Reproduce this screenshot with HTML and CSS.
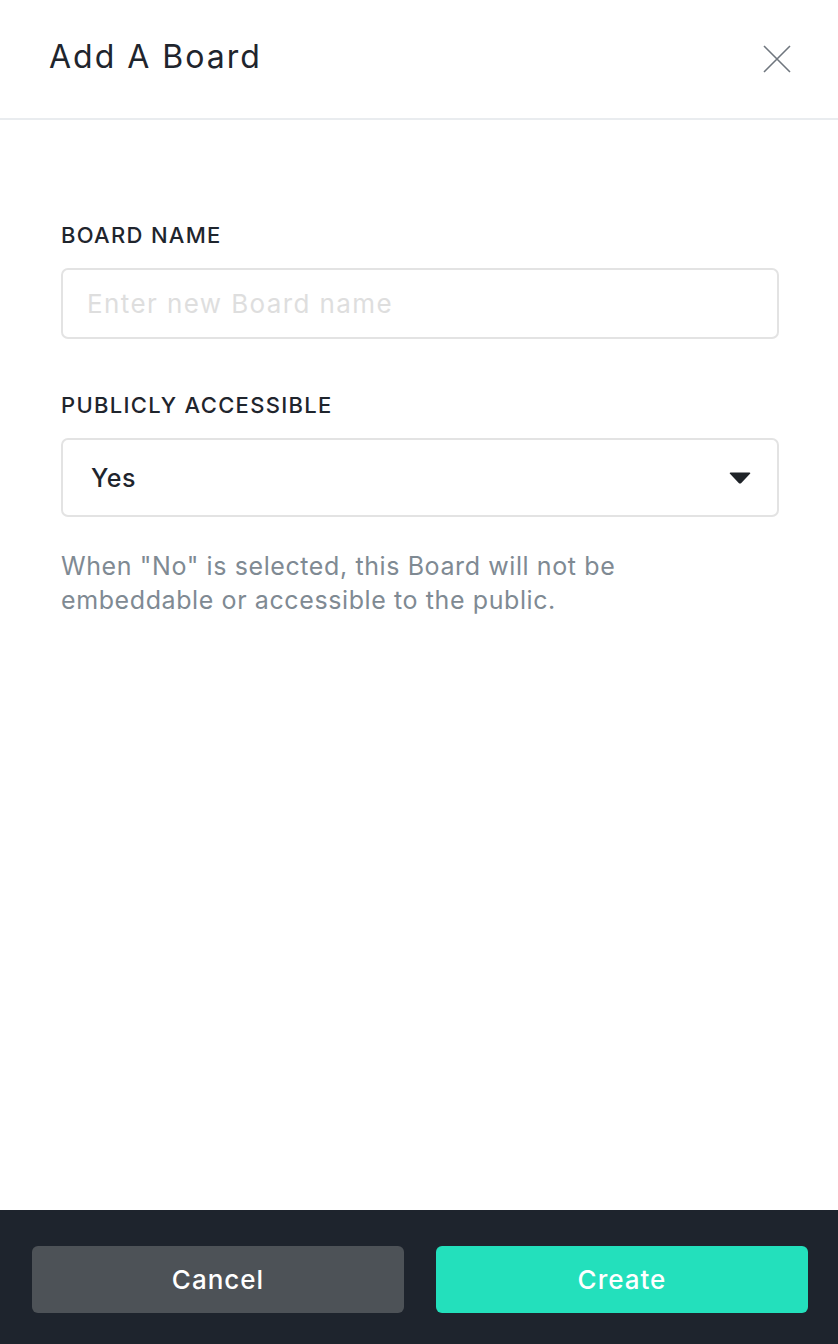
FILE: index.html
```html
<!DOCTYPE html>
<html lang="en">
<head>
<meta charset="utf-8">
<title>Add A Board</title>
<link rel="stylesheet" href="styles.css">
</head>
<body>
<div class="modal">
  <header class="modal-header">
    <h1 class="modal-title">Add A Board</h1>
    <button class="close-btn" aria-label="Close">
      <svg width="28" height="28" viewBox="0 0 28 28"><path d="M1 1 L27 27 M27 1 L1 27" stroke="#6f767e" stroke-width="1.6" fill="none"/></svg>
    </button>
  </header>
  <main class="modal-body">
    <div class="field">
      <label class="field-label">BOARD NAME</label>
      <div class="text-input"><span class="placeholder">Enter new Board name</span></div>
    </div>
    <div class="field">
      <label class="field-label">PUBLICLY ACCESSIBLE</label>
      <div class="select-input">
        <span class="select-value">Yes</span>
        <svg class="caret" width="22" height="12" viewBox="0 0 22 12"><path d="M1.5 0.5 H20.5 Q22 0.5 21 1.7 L12.3 11 Q11 12.2 9.7 11 L1 1.7 Q0 0.5 1.5 0.5 Z" fill="#1f2328"/></svg>
      </div>
      <p class="help-text">When "No" is selected, this Board will not be embeddable or accessible to the public.</p>
    </div>
  </main>
  <footer class="modal-footer">
    <button class="btn btn-cancel">Cancel</button>
    <button class="btn btn-create">Create</button>
  </footer>
</div>
</body>
</html>
```

FILE: styles.css
```css
* { box-sizing: border-box; }
html, body { margin: 0; padding: 0; }
body {
  font-family: Inter, "Noto Sans", "Liberation Sans", sans-serif;
  background: #ffffff;
  color: #1f252d;
}
.modal {
  height: 1344px;
  display: flex;
  flex-direction: column;
}
.modal-header {
  height: 120px;
  border-bottom: 2px solid #e9ecef;
  display: flex;
  align-items: center;
  justify-content: space-between;
  padding: 0 47px 6px 49px;
}
.modal-title {
  margin: 0;
  font-size: 32px;
  font-weight: 400;
  color: #1f252d;
  letter-spacing: 2px;
}
.close-btn {
  background: none;
  border: 0;
  padding: 0;
  width: 28px;
  height: 28px;
  display: flex;
  margin-top: 6px;
}
.modal-body {
  flex: 1;
  padding: 100px 59px 0 61px;
  display: flex;
  flex-direction: column;
  gap: 51px;
}
.field { display: flex; flex-direction: column; }
.field-label {
  font-size: 22px;
  font-weight: 500;
  line-height: 30px;
  color: #1f252d;
  letter-spacing: 1.3px;
  margin-bottom: 18px;
}
.text-input {
  height: 71px;
  border: 2px solid #e3e3e3;
  border-radius: 7px;
  display: flex;
  align-items: center;
  padding: 0 24px;
}
.placeholder {
  font-size: 26px;
  color: #dedede;
  letter-spacing: 1.4px;
}
.select-input {
  height: 79px;
  border: 2px solid #e3e3e3;
  border-radius: 7px;
  display: flex;
  align-items: center;
  justify-content: space-between;
  padding: 0 26px 0 28px;
}
.select-value {
  font-size: 25px;
  font-weight: 500;
  color: #1f252d;
  letter-spacing: 0.6px;
}
.help-text {
  margin: 32px 0 0;
  font-size: 25px;
  line-height: 34px;
  color: #7f8a93;
  letter-spacing: 0.6px;
  max-width: 620px;
}
.modal-footer {
  height: 134px;
  background: #1e242d;
  display: flex;
  gap: 32px;
  padding: 36px 30px 31px 32px;
}
.btn {
  flex: 1;
  border: 0;
  border-radius: 6px;
  font-family: inherit;
  font-size: 26px;
  font-weight: 500;
  letter-spacing: 1px;
  color: #ffffff;
}
.btn-cancel { background: #4d5257; }
.btn-create { background: #23e0bc; }
```
